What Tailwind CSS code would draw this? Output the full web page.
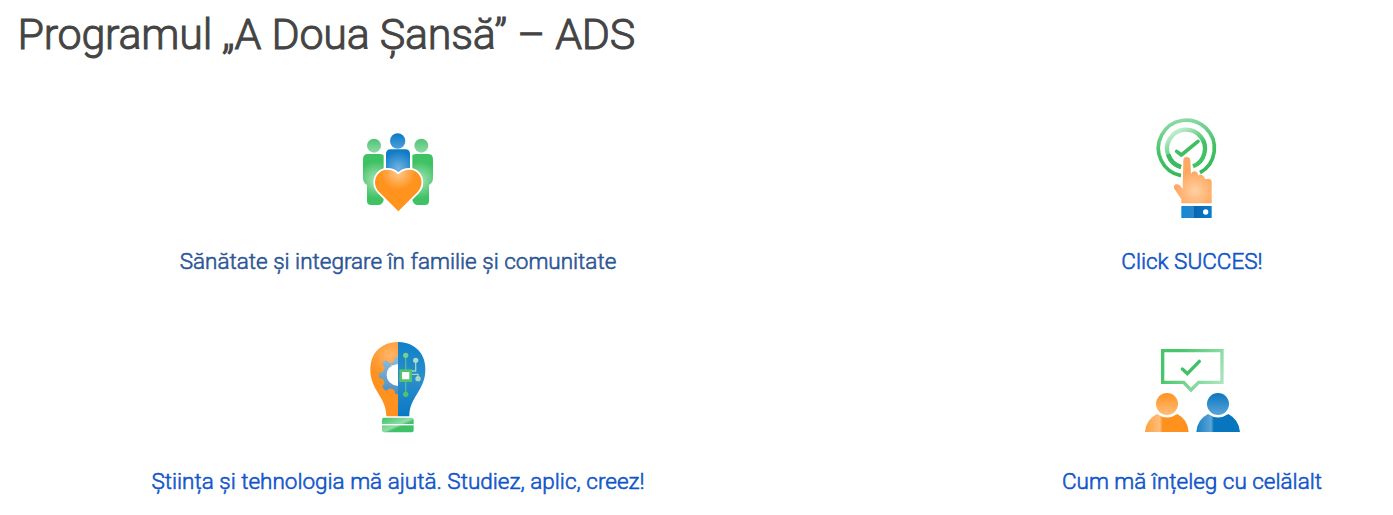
<!DOCTYPE html>
<html lang="ro">
<head>
<meta charset="utf-8">
<title>Programul „A Doua Șansă” – ADS</title>
<script src="https://cdn.jsdelivr.net/npm/@tailwindcss/browser@4"></script>
</head>
<body class="h-[515px] overflow-hidden bg-white font-['Roboto',sans-serif]">
<header class="h-[110px] pt-[7px] pl-[17.5px]">
  <h1 class="whitespace-nowrap text-[43px] leading-[54px] font-light tracking-[-0.23px] text-[#444] [-webkit-text-stroke:1px_#444]"><span>Programul „A Doua Șansă” – ADS</span></h1>
</header>
<main class="ml-px grid grid-cols-[794px_402px] gap-x-[196px] text-[22.5px] leading-[30px] font-light text-[#1155cc] [-webkit-text-stroke:0.6px_currentColor]">
  <a class="flex h-[225px] flex-col items-center text-[#2b5596]">
    <svg class="mt-[15px] h-24 w-24" viewBox="0 0 288 288">
      <defs>
        <radialGradient id="g1" gradientUnits="userSpaceOnUse" cx="78" cy="165" r="55"><stop offset="0" stop-color="#a9e4ba"/><stop offset="1" stop-color="#3fc264"/></radialGradient>
        <radialGradient id="g2" gradientUnits="userSpaceOnUse" cx="210" cy="165" r="55"><stop offset="0" stop-color="#a5e3b7"/><stop offset="1" stop-color="#3fc264"/></radialGradient>
        <radialGradient id="b1" gradientUnits="userSpaceOnUse" cx="145" cy="130" r="52"><stop offset="0" stop-color="#72b4e2"/><stop offset="1" stop-color="#0f7bc6"/></radialGradient>
        <radialGradient id="o1" gradientUnits="userSpaceOnUse" cx="145" cy="142" r="52"><stop offset="0" stop-color="#ffc98c"/><stop offset="1" stop-color="#ff931e"/></radialGradient>
        <linearGradient id="h1" x2="0" y2="1"><stop offset="0" stop-color="#50c372"/><stop offset="1" stop-color="#8cdba4"/></linearGradient>
        <linearGradient id="h2" x2="0" y2="1"><stop offset="0" stop-color="#0b7ac6"/><stop offset="1" stop-color="#4d9fd8"/></linearGradient>
      </defs>
      <circle cx="72" cy="62" r="21" fill="url(#h1)"/><circle cx="214" cy="62" r="21" fill="url(#h1)"/>
      <path d="M54 87H90Q100 87 101 92V226Q97 240 85 240H63Q51 240 51 228V180Q39 174 39 160V103Q39 87 54 87Z" fill="url(#g1)"/>
      <path d="M234 87H198Q188 87 187 92V226Q191 240 203 240H225Q237 240 237 228V180Q249 174 249 160V103Q249 87 234 87Z" fill="url(#g2)"/>
      <circle cx="143" cy="48" r="23" fill="url(#h2)"/>
      <path d="M108 150V87Q108 73 122 73H166Q180 73 180 87V150Z" fill="url(#b1)"/>
      <path d="M145 259L88 202C62 174 79 134 112 134Q132 134 145 148Q158 134 178 134C211 134 228 174 202 202Z" fill="url(#o1)" stroke="#fff" stroke-width="10" paint-order="stroke"/>
    </svg>
    <span class="mt-[25px] whitespace-nowrap">Sănătate și integrare în familie și comunitate</span>
  </a>
  <a class="flex h-[225px] flex-col items-center">
    <svg class="h-[116px] w-24" viewBox="12 0 288 348" fill="none">
      <defs>
        <linearGradient id="r1" gradientUnits="userSpaceOnUse" x1="125" y1="25" x2="155" y2="195"><stop offset="0" stop-color="#8edba7"/><stop offset=".55" stop-color="#40c265"/><stop offset="1" stop-color="#35b75a"/></linearGradient>
        <linearGradient id="r2" gradientUnits="userSpaceOnUse" x1="110" y1="65" x2="165" y2="150"><stop offset="0" stop-color="#bcebca"/><stop offset=".7" stop-color="#40c265"/></linearGradient>
        <radialGradient id="s1" gradientUnits="userSpaceOnUse" cx="165" cy="243" r="58"><stop offset="0" stop-color="#ffd0a0"/><stop offset="1" stop-color="#ffa863"/></radialGradient>
        <linearGradient id="c1" x2="1" y2="0"><stop offset="0" stop-color="#0f8bd5"/><stop offset=".4" stop-color="#2a85c9"/><stop offset=".42" stop-color="#0865b2"/><stop offset="1" stop-color="#0b7dcb"/></linearGradient>
      </defs>
      <path d="M123 197A84 84 0 1 1 180 188" stroke="url(#r1)" stroke-width="11"/>
      <path d="M123 171A57 57 0 1 1 159 169" stroke="url(#r2)" stroke-width="13"/>
      <path d="M85 133A57 57 0 0 0 123 171" stroke="#3bbb5f" stroke-width="13"/>
      <path d="M110 124L124 135L174 94" stroke="#3fbf63" stroke-width="11" stroke-linecap="round" stroke-linejoin="round"/>
      <path d="M130 151Q131 141 140 141Q150 141 151 151L153 192Q155 184 163 184Q173 184 175 197Q178 192 184 194Q193 197 195 208Q214 203 215 216V280H124V268L102 235Q100 224 110 223Q119 222 128 237L130 151Z" fill="url(#s1)"/>
      <path d="M124 288H215V324H124Z" fill="url(#c1)"/><circle cx="197" cy="306" r="8" fill="#fff"/>
    </svg>
    <span class="mt-[20px] whitespace-nowrap">Click SUCCES!</span>
  </a>
  <a class="flex h-[180px] flex-col items-center">
    <svg class="h-[106px] w-24" viewBox="0 0 288 318" fill="none">
      <defs>
        <radialGradient id="l1" gradientUnits="userSpaceOnUse" cx="120" cy="60" r="65"><stop offset="0" stop-color="#ffb56c"/><stop offset="1" stop-color="#ff921f"/></radialGradient>
        <linearGradient id="l2" x2="0" y2="1"><stop offset="0" stop-color="#0e80c9"/><stop offset=".5" stop-color="#2d8ecb"/><stop offset="1" stop-color="#0878c4"/></linearGradient>
        <linearGradient id="l3" x2="1" y2="1"><stop offset="0" stop-color="#3fc267"/><stop offset=".5" stop-color="#91dda8"/><stop offset=".6" stop-color="#3fc267"/></linearGradient>
        <linearGradient id="l4" x2="0" y2="1"><stop offset="0" stop-color="#93bdd8"/><stop offset="1" stop-color="#468fc4"/></linearGradient>
      </defs>
      <path d="M144 21V244H109C109 185 61 166 61 104Q61 54 99 32Q119 21 144 21Z" fill="url(#l1)"/>
      <path d="M144 21V244H178C178 185 226 166 226 104Q226 54 188 32Q169 21 144 21Z" fill="url(#l2)"/>
      <path d="M144 65L134 68L132 80L121 85L107 75L96 86L104 98L99 110L87 113V129L99 132L104 144L96 155L107 168L120 160L133 165L136 177H144Z" fill="url(#l4)"/>
      <path d="M144 87V153Q110 148 110 120T144 87Z" fill="#fff"/>
      <path d="M167 62V105M167 137V178" stroke="#52bd8c" stroke-width="4"/>
      <path d="M183 118H204V131M183 108H197V76" stroke="#9ad9bd" stroke-width="4"/>
      <circle cx="167" cy="61" r="8" fill="#75cf92"/><circle cx="197" cy="76" r="8" fill="#a5dfc5"/><circle cx="204" cy="131" r="8" fill="#a0dcc0"/><circle cx="167" cy="178" r="8" fill="#48c56d"/>
      <path d="M152 107H182V137H152Z" fill="#fff" stroke="#52c46d" stroke-width="8"/>
      <rect x="96" y="248" width="95" height="44" rx="6" fill="url(#l3)"/><path d="M96 269H191" stroke="#fff" stroke-width="4"/>
    </svg>
    <span class="mt-[25px] whitespace-nowrap">Știința și tehnologia mă ajută. Studiez, aplic, creez!</span>
  </a>
  <a class="flex h-[180px] flex-col items-center">
    <svg class="mt-[5px] h-[100px] w-[116px]" viewBox="-3 0 348 300" fill="none">
      <defs>
        <linearGradient id="m1" gradientUnits="userSpaceOnUse" x1="80" y1="30" x2="265" y2="150"><stop offset=".2" stop-color="#46c56a"/><stop offset="1" stop-color="#b5e9c5"/></linearGradient>
        <linearGradient id="m2" x2="0" y2="1"><stop offset="0" stop-color="#ff921f"/><stop offset="1" stop-color="#ffbd7b"/></linearGradient>
        <linearGradient id="m3" x2="0" y2="1"><stop offset="0" stop-color="#0b75bf"/><stop offset="1" stop-color="#5aa5d8"/></linearGradient>
        <linearGradient id="m4" x2="1" y2="0"><stop offset="0" stop-color="#ffa13b"/><stop offset=".34" stop-color="#ffbd7c"/><stop offset=".4" stop-color="#ff921e"/><stop offset="1" stop-color="#ff921e"/></linearGradient>
        <linearGradient id="m5" x2="1" y2="0"><stop offset="0" stop-color="#1681c6"/><stop offset=".34" stop-color="#5ca4d5"/><stop offset=".4" stop-color="#0875bf"/><stop offset="1" stop-color="#0875bf"/></linearGradient>
      </defs>
      <path d="M83 32H261V127H191L168 150L146 127H83Z" stroke="url(#m1)" stroke-width="10"/>
      <path d="M142 87L157 101L193 64" stroke="#3fc264" stroke-width="10" stroke-linecap="round"/>
      <circle cx="96" cy="192" r="33" fill="url(#m2)"/><circle cx="249" cy="192" r="33" fill="url(#m3)"/>
      <path d="M30 276Q32 239 66 222Q96 243 127 222Q159 239 161 276Z" fill="url(#m4)"/>
      <path d="M184 276Q186 239 219 222Q249 243 280 222Q312 239 315 276Z" fill="url(#m5)"/>
    </svg>
    <span class="mt-[26px] whitespace-nowrap">Cum mă înțeleg cu celălalt</span>
  </a>
</main>
</body>
</html>
